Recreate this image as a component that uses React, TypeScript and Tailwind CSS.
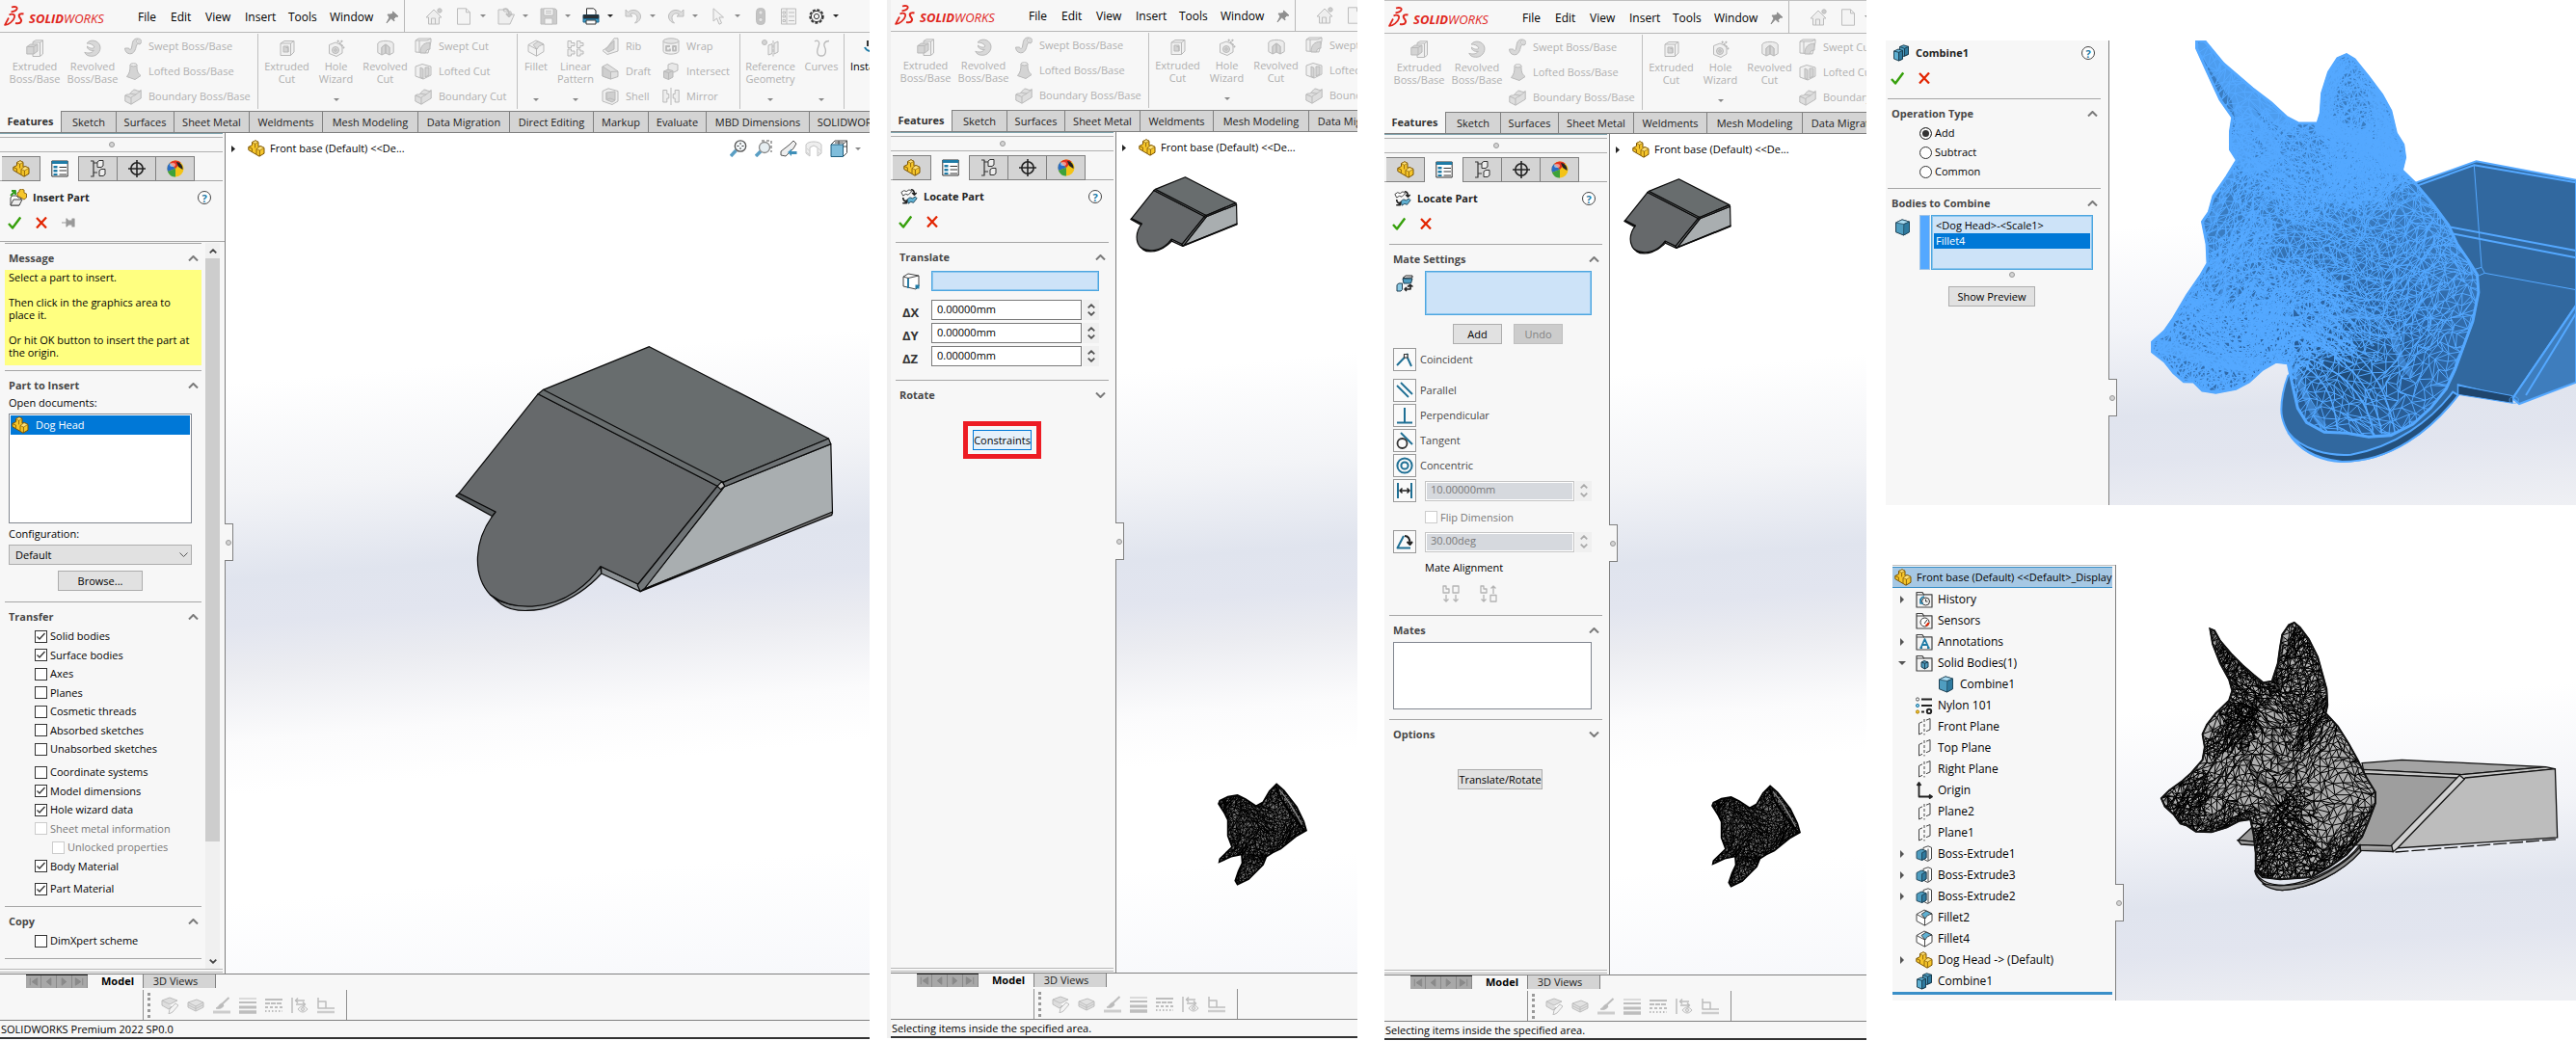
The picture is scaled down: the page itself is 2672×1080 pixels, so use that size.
import type { ReactNode } from "react";
import clsx from "clsx";

const FONT = "font-['Open_Sans','Noto_Sans',sans-serif]";

/* ---------- icons ---------- */

function Ico({ children, className = "size-[18px]", box = "0 0 18 18" }: { children: ReactNode; className?: string; box?: string }) {
  return (
    <svg viewBox={box} className={clsx("shrink-0", className)} fill="none" stroke="currentColor" strokeLinejoin="round" aria-hidden="true">
      {children}
    </svg>
  );
}

function PartIcon({ className }: { className?: string }) {
  return (
    <Ico className={className}>
      <g stroke="#7a5200">
        <path fill="#f6c62b" d="M.8 7.500 4.500 5.600V2.600L8 .8l3 1.600v5l2-1 4 2v5.800L12 17.200.8 10.600z" />
        <path fill="#ffe27a" strokeWidth=".6" d="M4.500 2.600 8 .8l3 1.600-3.400 1.800zM9 9.500l4-2.900 4 1.800-4.600 2.600z" />
        <path strokeWidth=".8" d="M.8 7.500 4.400 9v3.600M7.600 4.200v4.200M12.400 11v6M9 9.500v5.400" />
      </g>
    </Ico>
  );
}

function CubeIcon({ className }: { className?: string }) {
  return (
    <Ico className={className}>
      <g stroke="#1d3f52">
        <path fill="#4f9dc0" d="M1.500 4 8 .9l7.500 2.200v10.600L9.500 17l-8-3.200z" />
        <path fill="#a9dcf2" strokeWidth=".7" d="M1.500 4 8 .9l7.500 2.200-5.700 2.500z" />
        <path fill="#2f7a9f" strokeWidth=".7" d="m9.800 5.600 5.700-2.500v10.600L9.500 17z" />
      </g>
    </Ico>
  );
}

function CombineIcon() {
  return (
    <Ico>
      <g stroke="#16384a" strokeWidth=".9">
        <path fill="#4f9dc0" d="M7.500 2.500 11.500.8l5 1.500v8L12 12.500 7.500 11z" />
        <path fill="#2f7a9f" d="m12.500 4.300 4-2v8L12.500 12z" />
        <path fill="#5fb0d2" d="M1.500 7 6 5l4.500 1.400v8.800L6.500 17l-5-2z" />
        <path fill="#2f7a9f" d="m6.500 8.300 4-1.900v8.800L6.500 17z" />
        <path d="M1.500 7l5 1.300M7.500 2.500l5 1.800" />
      </g>
    </Ico>
  );
}

function ExtrudeIcon() {
  return (
    <Ico>
      <g stroke="#333" strokeWidth=".9">
        <path fill="#fff" d="M8 2.500 13 .8l3.500 1.500V14l-4 2.500L8 14z" />
        <path d="M13 3.500V16" />
        <path fill="#4f9dc0" stroke="#1d3f52" d="M1 6.500 6 4l5 1.600V13L6.500 15.500 1 13.500z" />
        <path fill="#2f7a9f" stroke="#1d3f52" d="m6.500 7.800 4.500-2.200V13l-4.500 2.500z" />
      </g>
    </Ico>
  );
}

function FilletIcon({ tone = "color" }: { tone?: "color" | "gray" }) {
  const edge = tone === "color" ? "#333" : "#b3b3b3";
  return (
    <Ico>
      <g stroke={edge} strokeWidth=".9">
        <path fill={tone === "color" ? "#fff" : "#f2f2f2"} d="M1 5.500 9 1l8 4v7.500L9.500 17.200 1 12.500z" />
        <path fill={tone === "color" ? "#5fb0d2" : "#dcdcdc"} d="M6 5.500 11 2l6 3c-4 1-6 2.500-7 5z" />
        <path d="M1 5.500 9.500 10v7" />
      </g>
    </Ico>
  );
}

function PlaneIcon() {
  return (
    <Ico>
      <path stroke="#444" d="M3.500 5.500 7 3.800M11 2.200l4-1.700V12M3.500 5.500V17L7 15.300M11 13.700l4-1.700" />
      <path stroke="#444" strokeDasharray="3 2" d="M9 1v16.500" />
    </Ico>
  );
}

function FolderIcon({ children }: { children: ReactNode }) {
  return (
    <Ico>
      <path stroke="#444" fill="#f4f4f4" strokeWidth="1.200" d="M1 17V1.500h6l1.500 2.300H17V17z" />
      <path stroke="#444" d="M1 4h8" />
      {children}
    </Ico>
  );
}

function OkCancel({ pin = false }: { pin?: boolean }) {
  return (
    <div className="flex h-[18px] items-center gap-[15px] pl-2">
      <button type="button" aria-label="OK">
        <Ico className="size-[14px]" box="0 0 14 14">
          <path stroke="#37a00c" strokeWidth="2.400" d="M1 8l4 4.500L13.200 1.500" />
        </Ico>
      </button>
      <button type="button" aria-label="Cancel">
        <Ico className="size-[12px]" box="0 0 12 12">
          <path stroke="#e22400" strokeWidth="2.200" d="M1 1l10 10.500M11 .5 1 11.500" />
        </Ico>
      </button>
      {pin && (
        <button type="button" aria-label="Keep visible">
          <Ico className="h-3 w-[14px]" box="0 0 14 12">
            <path fill="#999" stroke="#999" strokeWidth="1.200" d="M0 6h5M5 2v8l2-2.200h4V10h2V2h-2v2.200H7z" />
          </Ico>
        </button>
      )}
    </div>
  );
}

function HelpButton() {
  return (
    <button type="button" className="grid size-[14px] place-items-center rounded-full border border-[#444] bg-white leading-none font-bold text-[#1f7ba6]" aria-label="Help">
      ?
    </button>
  );
}

function Down({ dark = false }: { dark?: boolean }) {
  return (
    <Ico className="h-[3px] w-[6px]" box="0 0 6 3">
      <path d="M0 0h6L3 3z" stroke="none" fill={dark ? "#222" : "#888"} />
    </Ico>
  );
}

function Chevron({ down = false, small = false }: { down?: boolean; small?: boolean }) {
  return (
    <Ico className={small ? "h-[5px] w-2" : "h-[6px] w-[11px]"} box="0 0 11 6">
      <path strokeWidth={small ? 2.400 : 2} d={down ? "M1 .5 5.500 5 10 .5" : "M1 5.500 5.500 1 10 5.500"} />
    </Ico>
  );
}

/* ribbon icons, all in the disabled tone */
const RIBBON: Record<string, ReactNode> = {
  extrude: <><path fill="#f0f0f0" d="M7 2.500 10 .8h7.500V15l-3 2.500H7z" /><path d="M14.500 3v14M7 3h7.500l3-2" /><path fill="#d4d4d4" d="M.8 7.500 4.500 5H12v7l-4 3H.8z" /><path d="M.8 7.500H8V15M8 7.500 12 5" /></>,
  revolve: <path fill="#d8d8d8" d="M3 4C6-.5 15 0 16.800 7c1 5-3 10.500-9 10.300-4 0-6.300-2-7-4 4 1.500 8 .5 9.500-2C7 12 3 10 3.500 7c2 2 6 3 7.500 1C10 5 6 4 3 4z" />,
  sweep: <path fill="#d8d8d8" d="M11 1.500c3-1.500 7 0 7 3l-2 2.500c-1.500-1-3-.5-3.500 1C11.500 13 10 17 5.500 16.800 2 16.500.5 13.500.6 11h4c.3 2 2.300 2 2.800 0C8.400 7 8 3 11 1.500zM14 1.500c-1.500 1-2 3-.5 4" />,
  loft: <><path fill="#d4d4d4" d="M6 2.500h7c0 6 .5 8 4 11l-6 4-8.500-3C5.500 11 6 8 6 2.500z" /><ellipse cx="9.500" cy="2.300" rx="3.500" ry="1.600" fill="#eee" /></>,
  boundary: <><path fill="#dedede" d="M.8 8C3 6 4 8 6 6s3-5 6-3.500 4 1 5.200 0V11L7 17.200.8 14z" /><path d="M.8 8l6 2.500C9 8 9.500 9 12 7s3-2 5.200-4M7 10.500v6.700M6 6l6 1.200" /></>,
  cut: <><path fill="#f0f0f0" d="M2 4 6 1.500h10V13l-3.500 3.500H2z" /><path d="M2 4h10.500v12.500M12.500 4 16 1.500" /><path fill="#d4d4d4" d="M5 7h5v6H5zM7.500 8.500h2.500V13" /></>,
  hole: <><path fill="#f0f0f0" d="M1.500 5.500 8 3l7 3v8l-6 3.500-7.500-3z" /><circle cx="8" cy="11" r="3.500" fill="#d8d8d8" /><circle cx="8" cy="11" r="1.300" /><path strokeWidth="2" strokeDasharray="2 1" d="M10 1l7 8M15 1l-3 4" /></>,
  revcut: <><path fill="#ececec" d="M.8 4C3 .5 15 .5 17.200 4v9.500L13 16V8l-4-3-4 3v8L.8 13.500z" /><path fill="#d4d4d4" d="M5 8l4-3v9l-4 2zM13 8 9 5v9l4 2z" /></>,
  sweptcut: <><path fill="#f0f0f0" d="M1 3 4 1h13v3l-3 12-13-1z" /><path fill="#d4d4d4" d="M6 16C6 9 9 5.500 16 5v7c-3 0-4 1-4.500 4z" /><path d="M1 3h12l4-2M5 3v12" /></>,
  loftcut: <><path fill="#f0f0f0" d="M1 4 8 1.500 17 4v9l-8 4-8-3z" /><path fill="#d4d4d4" d="M6 5l3 1.500v10L6 15zM11 5h4v8l-4 2z" /></>,
  linear: <path fill="#eee" d="M1 1.500h3.500v2H8v3H4.500v2H1zM10.500 1.500H14v2h3v3h-3v2h-3.500zM1 10h3.500v2H8v3H4.500v2H1zM10.500 10H14v2h3v3h-3v2h-3.500z" />,
  rib: <><path fill="#eee" d="M6 10 13 .8h4V14L6 17.500 1 13.500z" /><path fill="#cfcfcf" d="M4 12.500 13 3v9l-6 3z" /></>,
  draft: <><path fill="#e0e0e0" d="M1 4 6 1.500 17 9v5.500L9.500 17 1 14z" /><path fill="#cfcfcf" d="m1 4 8.500 5.500V17L1 14z" /><path d="M9.500 9.500 17 9" /></>,
  shell: <><path fill="#eee" d="M1 3.500 7 .8l10 2.700V14l-6 3.500L1 14z" /><path fill="#cfcfcf" d="M5 5l9-1v9l-3 2-6-2.500z" /><path d="M5 5v7.500l4-1.500 5 2" /></>,
  wrap: <><path fill="#f0f0f0" d="M1 3.500v11c2 3.500 14 3.500 16 0v-11" /><ellipse cx="9" cy="3.500" rx="8" ry="2.700" fill="#e4e4e4" /><path strokeWidth="1.800" d="M8 9H4v4.500h4v-2M11 9h3v4.500h-3z" /></>,
  intersect: <><path fill="#e8e8e8" d="M6 2l4-1.500 6 1.500v6l-4 2-6-2z" /><path fill="#cfcfcf" d="M1.500 9 6 7l5 1.500V15l-4.500 2.500-5-2z" /><path d="M1.500 9l5 1.500v7M11 8.500l-4.500 2" /></>,
  mirror: <path d="M9 0v18M.8 2.500h4v4h2v4.500h-2v4h-4zM17.200 2.500h-4v4h-2v4.500h2v4h4z" fill="#eee" />,
  refgeo: <><circle cx="3" cy="3" r="2.500" fill="#d4d4d4" /><path fill="#eee" d="M7 6l4-1.500v10L7 16zM13 4l4-2v11l-4 2z" /><path strokeDasharray="3 1.500" d="M12 1v16.500" /></>,
  curves: <path strokeWidth="1.300" d="M2 2c3-2 6 0 4 5s-2 10 3 10 5-6 3.500-9S12 1.500 17 1.500" />,
};

function RibbonIcon({ name }: { name: string }) {
  if (name === "fillet") return <FilletIcon tone="gray" />;
  return <Ico className="size-[18px] text-[#b9b9b9]">{RIBBON[name]}</Ico>;
}

/* ---------- menu bar and ribbon ---------- */

function Logo() {
  return (
    <div className="flex w-[114px] shrink-0 items-center gap-1 pl-1 text-[#e0261c]">
      <Ico className="h-[22px] w-[22px]" box="0 0 22 22">
        <path strokeWidth="1.800" d="M8 1.500c3-1 6.500-.5 5.500 1.800C12.800 5 9.500 6 7.500 6.300" />
        <path strokeWidth="1.700" d="M5.500 9.500C8 8 12 8.500 11 12c-1 4-6 7.500-10 8L5 12.500" />
        <path strokeWidth="2" d="M20.500 8.500c-3-.8-5.500.5-4.500 2.800s3 3 1.800 5.200c-.8 1.700-3.500 2-5.800 1.500" />
      </Ico>
      <span className="pt-1 text-[13px] leading-4 italic">
        <b>SOLID</b>WORKS
      </span>
    </div>
  );
}

const MENUS: [string, string][] = [
  ["File", "w-[34px]"],
  ["Edit", "w-[36px]"],
  ["View", "w-[41px]"],
  ["Insert", "w-[45px]"],
  ["Tools", "w-[43px]"],
  ["Window", "w-[58px]"],
];

const QUICK: { label: string; drop?: boolean; dark?: boolean; art: ReactNode }[] = [
  { label: "Home", art: <><path fill="#eee" d="M1 10 9 2l8 8h-2.500v7h-11v-7z" /><path d="M6.500 17v-6h4v6" /><circle cx="15" cy="3" r="2.200" fill="#ccc" /></> },
  { label: "New", drop: true, art: <path fill="#f4f4f4" d="M2.500.8h9l4 4v12.400h-13zM11.500.8v4h4" /> },
  { label: "Open", drop: true, art: <><path fill="#eee" d="M1 17V2h5l1 2h7v3h3.500L13 17z" /><path strokeWidth="2" d="M6 2c4-2 6 1 6 5M9 6l3 3 3-3" /></> },
  { label: "Save", drop: true, art: <><path fill="#ccc" d="M1 1h15l1.500 1.500V17H1z" /><path fill="#f4f4f4" d="M4 1h10v7H4zM5 11h8v6H5zM6 3.500h6M6 5.500h6" /></> },
  { label: "Print", drop: true, dark: true, art: <><path stroke="#333" fill="#fff" d="M4.500 7V.8h7l2.500 2V7" /><path stroke="#17394c" fill="#2a2f33" d="M1 7.500h16v4H1z" /><path stroke="#17618a" fill="#3fa0cb" d="M1 11.500h16V15H1z" /><path stroke="#333" fill="#fff" d="M4 13h10v4H4z" /></> },
  { label: "Undo", drop: true, art: <path fill="#ddd" d="M1 2v7h7L5.500 6.800C9 4.500 13 7 13 10.500c0 2.500-1 4-2.500 5.500 4-1 6-4 6-7C16.500 3.500 9 0 3.500 4.500z" /> },
  { label: "Redo", drop: true, art: <path fill="#ddd" d="M17 2v7h-7l2.500-2.200C9 4.500 5 7 5 10.500c0 2.500 1 4 2.500 5.500-4-1-6-4-6-7C1.500 3.500 9 0 14.500 4.500z" /> },
  { label: "Select", drop: true, art: <path fill="#f2f2f2" d="M4 .8 14.500 10H10l2.500 6-2.500 1.200L7.500 11 4 14z" /> },
  { label: "Rebuild", art: <><rect x="4.500" y=".5" width="9" height="17" rx="4" fill="#c4c4c4" /><circle cx="9" cy="5" r="2.200" fill="#e4e4e4" /><circle cx="9" cy="12.500" r="2.200" fill="#e4e4e4" /></> },
  { label: "File properties", art: <><path fill="#f2f2f2" d="M1.500 1h15v16h-15zM7 1v16" /><path d="M3 4h2.500v2H3zM3 8h2.500v2H3zM3 12.500h2.500v2H3zM9 5h6M9 9h6M9 13.500h6" /></> },
  { label: "Options", drop: true, dark: true, art: <><circle cx="9" cy="9" r="6.800" stroke="#333" strokeWidth="1.800" strokeDasharray="3 1.600" /><circle cx="9" cy="9" r="5.600" stroke="#333" /><circle cx="9" cy="9" r="2.600" stroke="#333" /></> },
];

function MenuBar({ className, wide }: { className: string; wide?: boolean }) {
  return (
    <div className={clsx("flex shrink-0 overflow-hidden border-b border-[#b8b8b8]", className)}>
      <Logo />
      <nav className="flex shrink-0 items-center pt-[2px] pl-[29px] text-[12px]">
        {MENUS.map(([label, width]) => (
          <button key={label} type="button" className={clsx("text-left", width)}>
            {label}
          </button>
        ))}
        <Ico className="size-[14px]" box="0 0 14 14">
          <path fill="#8f8f8f" stroke="#8f8f8f" d="M7.500 1l5.500 5-2.500.3-2 2.200L9 11 5.500 8 1 13l3-6L2 4h3l2.500-1z" />
        </Ico>
      </nav>
      <div className="ml-[5px] w-px shrink-0 bg-[#b8b8b8]" />
      <div className="flex shrink-0 items-center pl-[21px]">
        {QUICK.slice(0, wide ? QUICK.length : 2).map((q) => (
          <button key={q.label} type="button" aria-label={q.label} className={clsx("flex items-center", q.drop ? "w-11 gap-2" : q.label === "Home" ? "w-[31px]" : "w-[29px]")}>
            <Ico className="size-[18px] text-[#bdbdbd]">{q.art}</Ico>
            {q.drop && <Down dark={q.dark} />}
          </button>
        ))}
      </div>
    </div>
  );
}

function BigTool({ icon, lines, width, drop }: { icon: string; lines: string[]; width: string; drop?: boolean }) {
  return (
    <button type="button" className={clsx("flex shrink-0 flex-col items-center pt-[6px] leading-[13px] text-[#b0b0b0]", width)}>
      <RibbonIcon name={icon} />
      <span className="mt-[3px] h-[26px] whitespace-nowrap">
        {lines[0]}
        <br />
        {lines[1]}
      </span>
      {drop && (
        <span className="mt-[14px]">
          <Down />
        </span>
      )}
    </button>
  );
}

function SmallTools({ items, className }: { items: [string, string][]; className: string }) {
  return (
    <div className={clsx("flex shrink-0 flex-col text-[#b0b0b0]", className)}>
      {items.map(([icon, label]) => (
        <button key={label} type="button" className="flex h-[26px] items-center gap-[7px] whitespace-nowrap">
          <RibbonIcon name={icon} />
          {label}
        </button>
      ))}
    </div>
  );
}

function Ribbon({ wide }: { wide?: boolean }) {
  return (
    <div className="flex h-[81px] shrink-0 overflow-hidden pt-px pb-[2px]">
      <div className="flex w-[268px] shrink-0 border-r border-[#c0c0c0] pl-[6px]">
        <BigTool icon="extrude" lines={["Extruded", "Boss/Base"]} width="w-[60px]" />
        <BigTool icon="revolve" lines={["Revolved", "Boss/Base"]} width="w-[60px]" />
        <SmallTools className="pl-[3px]" items={[["sweep", "Swept Boss/Base"], ["loft", "Lofted Boss/Base"], ["boundary", "Boundary Boss/Base"]]} />
      </div>
      <div className="flex w-[269px] shrink-0 border-r border-[#c0c0c0] pl-1">
        <BigTool icon="cut" lines={["Extruded", "Cut"]} width="w-[51px]" />
        <BigTool icon="hole" lines={["Hole", "Wizard"]} width="w-[51px]" drop />
        <BigTool icon="revcut" lines={["Revolved", "Cut"]} width="w-[51px]" />
        <SmallTools className="pl-[5px]" items={[["sweptcut", "Swept Cut"], ["loftcut", "Lofted Cut"], ["boundary", "Boundary Cut"]]} />
      </div>
      {wide && (
        <>
          <div className="flex w-[231px] shrink-0 border-r border-[#c0c0c0]">
            <BigTool icon="fillet" lines={["Fillet", ""]} width="w-[38px]" drop />
            <BigTool icon="linear" lines={["Linear", "Pattern"]} width="w-11" drop />
            <SmallTools className="w-[63px] pl-[5px]" items={[["rib", "Rib"], ["draft", "Draft"], ["shell", "Shell"]]} />
            <SmallTools className="pl-[5px]" items={[["wrap", "Wrap"], ["intersect", "Intersect"], ["mirror", "Mirror"]]} />
          </div>
          <div className="flex w-[108px] shrink-0 border-r border-[#c0c0c0]">
            <BigTool icon="refgeo" lines={["Reference", "Geometry"]} width="w-[62px]" drop />
            <BigTool icon="curves" lines={["Curves", ""]} width="w-11" drop />
          </div>
          <button type="button" className="flex shrink-0 flex-col items-start pt-[6px] pl-[6px] leading-[13px]">
            <Ico className="ml-[14px] size-[18px]">
              <path stroke="#1f7ba6" strokeWidth="2" d="M1 8c2 5 12 6 16 2" />
              <path stroke="#333" strokeWidth="2" d="M4 1v6" />
            </Ico>
            <span className="mt-[3px]">Instant3D</span>
          </button>
        </>
      )}
    </div>
  );
}

const TABS: [string, string][] = [
  ["Features", "w-[63px]"],
  ["Sketch", "w-[57px]"],
  ["Surfaces", "w-[60px]"],
  ["Sheet Metal", "w-[78px]"],
  ["Weldments", "w-[76px]"],
  ["Mesh Modeling", "w-[99px]"],
  ["Data Migration", "w-[95px]"],
  ["Direct Editing", "w-[87px]"],
  ["Markup", "w-[57px]"],
  ["Evaluate", "w-[60px]"],
  ["MBD Dimensions", "w-[107px]"],
  ["SOLIDWORKS Add-Ins", "w-[128px]"],
];

function CommandTabs({ wide }: { wide?: boolean }) {
  return (
    <div className="flex h-[23px] shrink-0 overflow-hidden border-b border-[#808080] text-[#222]">
      {TABS.slice(0, wide ? TABS.length : 7).map(([label, width], i) => (
        <button
          key={label}
          type="button"
          className={clsx("shrink-0 whitespace-nowrap", width, i === 0 ? "font-bold text-[#333]" : "border-t border-l border-[#808080] bg-[#d4d4d4]")}
        >
          {label}
        </button>
      ))}
    </div>
  );
}

/* ---------- property manager pieces ---------- */

const PM_TABS: { label: string; art: ReactNode }[] = [
  { label: "FeatureManager", art: <PartIcon /> },
  { label: "PropertyManager", art: <Ico><path stroke="#333" fill="#fff" d="M.8 1h16.400v16H.8z" /><path stroke="none" fill="#1f7ba6" d="M.8 1h16.400v3H.8zM2.500 6h4v2.500h-4zM2.500 10h4v2.500h-4zM2.500 14h4v2h-4z" /><path stroke="#333" d="M8.500 7.500H16M8.500 11H16M8.500 15H16" /></Ico> },
  { label: "ConfigurationManager", art: <Ico><path stroke="#333" strokeWidth="1.200" d="M4 1v15M4 3h4M4 13h4M1 1h3v16H1" /><path stroke="#333" fill="#eee" d="M8 2l2-1.500h4V6l-2 1.500H8zM10 11l2-1.500h4V15l-2 1.500h-4z" /></Ico> },
  { label: "DimXpertManager", art: <Ico><circle cx="9" cy="9" r="6.200" stroke="#222" strokeWidth="1.600" /><path stroke="#222" strokeWidth="1.600" d="M9 0v18M0 9h18" /></Ico> },
  { label: "DisplayManager", art: <Ico><g stroke="none"><circle cx="9" cy="9" r="8.500" fill="#f3c316" /><path fill="#e23222" d="M9 9 3 3a8.500 8.500 0 0 1 11.500-.5z" /><path fill="#2a6cc4" d="M9 9 1 12A8.500 8.500 0 0 1 3 3z" /><path fill="#3da23a" d="M9 9v8.500A8.500 8.500 0 0 1 1 12z" /><path fill="#222" d="M10 2c4 0 7 4 6.500 8L12 7z" /><ellipse cx="6" cy="5" rx="3" ry="2" fill="#fff" opacity=".5" /></g></Ico> },
];

function Section({ title, closed, children, className }: { title: string; closed?: boolean; children?: ReactNode; className?: string }) {
  return (
    <section className={clsx("border-t border-[#a6a6a6]", className)}>
      <h3 className="flex h-[25px] items-center justify-between pt-1 pr-[3px] pl-1 font-bold text-[#484848]">
        {title}
        <button type="button" className="text-[#7a7a7a]" aria-label={closed ? `Expand ${title}` : `Collapse ${title}`}>
          <Chevron down={closed} />
        </button>
      </h3>
      {children}
    </section>
  );
}

function PushButton({ children, className, disabled }: { children: ReactNode; className: string; disabled?: boolean }) {
  return (
    <button
      type="button"
      disabled={disabled}
      className={clsx("h-[21px] border whitespace-nowrap", disabled ? "border-[#bfbfbf] bg-[#cccccc] text-[#838383]" : "border-[#adadad] bg-[#e1e1e1]", className)}
    >
      {children}
    </button>
  );
}

function Check({ label, checked, disabled, className }: { label: string; checked?: boolean; disabled?: boolean; className?: string }) {
  return (
    <label className={clsx("flex items-center gap-[3px] whitespace-nowrap", disabled && "text-[#787878]", className)}>
      <span className="grid">
        <input
          type="checkbox"
          defaultChecked={checked}
          disabled={disabled}
          className="peer size-[13px] appearance-none border border-[#333] bg-white [grid-area:1/1] disabled:border-[#cccccc]"
        />
        <span className="pointer-events-none hidden [grid-area:1/1] peer-checked:block">
          <Ico className="size-[13px]" box="0 0 13 13">
            <path stroke="#333" strokeWidth="1.300" d="M2.500 6.500 5 9l5.500-6" />
          </Ico>
        </span>
      </span>
      {label}
    </label>
  );
}

function Spin({ label, value, disabled }: { label: string; value: string; disabled?: boolean }) {
  return (
    <span className="flex h-[21px] min-w-0 flex-1">
      <input
        aria-label={label}
        defaultValue={value}
        disabled={disabled}
        className={clsx(
          "w-0 min-w-0 flex-1 border px-[5px] pb-[2px]",
          disabled ? "border-[#c4c4c4] bg-[#d6d9de] text-[#787878] inset-ring inset-ring-white" : "border-[#7a7a7a] bg-white",
        )}
      />
      <span className={clsx("ml-px flex w-[17px] shrink-0 flex-col items-center justify-around bg-[#f0f0f0] py-[2px]", disabled ? "text-[#aaa]" : "text-[#555]")}>
        <button type="button" disabled={disabled} aria-label={`Increase ${label}`}>
          <Chevron small />
        </button>
        <button type="button" disabled={disabled} aria-label={`Decrease ${label}`}>
          <Chevron small down />
        </button>
      </span>
    </span>
  );
}

const HIGHLIGHT = "border border-[#4da6e0] bg-[#cde3f8] inset-ring inset-ring-[#8cc6ee]";

type Option = { label: string; on?: boolean; off?: boolean };

const TRANSFER: Option[][] = [
  [{ label: "Solid bodies", on: true }, { label: "Surface bodies", on: true }, { label: "Axes" }, { label: "Planes" }, { label: "Cosmetic threads" }, { label: "Absorbed sketches" }, { label: "Unabsorbed sketches" }],
  [{ label: "Coordinate systems" }, { label: "Model dimensions", on: true }, { label: "Hole wizard data", on: true }, { label: "Sheet metal information", off: true }, { label: "Unlocked properties", off: true }, { label: "Body Material", on: true }],
  [{ label: "Part Material", on: true }],
];

function InsertPartPanel() {
  return (
    <div className="-mt-0.5 flex min-h-0 min-w-0 flex-1 border-t border-[#a6a6a6] pt-px">
      <div className="ml-[5px] min-w-0 flex-1 overflow-hidden">
        <Section title="Message" className="pb-[5px]">
          <div className="mt-[2px] h-[99px] bg-[#ffff80] pt-px pr-2 pl-1 leading-[13px] whitespace-pre-line">
            {"Select a part to insert.\n\nThen click in the graphics area to place it.\n\nOr hit OK button to insert the part at the origin."}
          </div>
        </Section>
        <Section title="Part to Insert" className="pb-[11px]">
          <div className="mr-[10px] ml-1">
            <p className="h-[19px]">Open documents:</p>
            <ul className="h-[114px] border border-[#828790] bg-white p-px">
              <li className="flex h-5 items-center gap-[7px] bg-[#0078d7] pl-px text-white">
                <PartIcon />
                Dog Head
              </li>
            </ul>
            <label htmlFor="config" className="flex h-[22px] items-center">
              Configuration:
            </label>
            <div className="grid">
              <select id="config" className="h-[21px] appearance-none border border-[#adadad] bg-[#e1e1e1] px-[6px] [grid-area:1/1]">
                <option>Default</option>
              </select>
              <span className="pointer-events-none mr-1 self-center justify-self-end text-[#555] [grid-area:1/1]">
                <Ico className="h-[5px] w-[9px]" box="0 0 9 5">
                  <path d="M.5.5l4 4 4-4" />
                </Ico>
              </span>
            </div>
            <PushButton className="mx-auto mt-[6px] block w-[88px]">Browse...</PushButton>
          </div>
        </Section>
        <Section title="Transfer" className="pb-2">
          <div className="flex flex-col gap-1">
            {TRANSFER.map((group, i) => (
              <div key={i}>
                {group.map((o) => (
                  <Check
                    key={o.label}
                    label={o.label}
                    checked={o.on}
                    disabled={o.off}
                    className={clsx("odd:h-5 even:h-[19px]", o.label === "Unlocked properties" ? "ml-[49px]" : "ml-[31px]")}
                  />
                ))}
              </div>
            ))}
          </div>
        </Section>
        <Section title="Copy" className="border-b pb-2">
          <Check label="DimXpert scheme" className="ml-[31px] h-5" />
        </Section>
      </div>
      <div className="mr-[5px] ml-1 flex w-[15px] flex-col bg-[#f0f0f0] text-[#444]">
        <span className="grid h-4 place-items-center">
          <Chevron small />
        </span>
        <span className="flex-[604] bg-[#cdcdcd]" />
        <span className="flex-[116]" />
        <span className="grid h-4 place-items-center">
          <Chevron small down />
        </span>
      </div>
    </div>
  );
}

function TranslatePanel() {
  return (
    <div className="mr-[7px] ml-[5px] min-w-0 flex-1">
      <Section title="Translate" className="pb-[11px]">
        <div className="mr-[10px] ml-[7px]">
          <div className="mt-1 mb-[9px] flex items-center">
            <span className="w-[30px] shrink-0">
              <Ico>
                <path stroke="#444" fill="#fff" d="M1 4 6 1l11 2v11l-3 3-13-3z" />
                <path stroke="#444" d="M1 4l5 1.500L17 3M6 5.500V16" />
                <path stroke="#1f7ba6" strokeWidth="1.800" d="M6 6v10" />
                <path stroke="none" fill="#1f7ba6" d="M13.500 12.500h4v4h-4z" />
              </Ico>
            </span>
            <input aria-label="Translate reference" readOnly className={clsx("h-[21px] w-0 min-w-0 flex-1", HIGHLIGHT)} />
          </div>
          {["X", "Y", "Z"].map((axis) => (
            <div key={axis} className="mb-[3px] flex h-[21px] items-center">
              <b className="w-[30px] shrink-0 pt-1 text-[13px] leading-4 text-[#333]">Δ{axis}</b>
              <Spin label={`Delta ${axis}`} value="0.00000mm" />
            </div>
          ))}
        </div>
      </Section>
      <Section title="Rotate" closed />
      <div className="mt-[17px] ml-[70px] w-[81px] border-[5px] border-[#ed1c24] px-[5px] py-1">
        <button type="button" className="h-[21px] w-full border border-[#0078d7] bg-[#e5f1fb] whitespace-nowrap">
          Constraints
        </button>
      </div>
    </div>
  );
}

const MATES: { label: string; gap?: boolean; art: ReactNode }[] = [
  { label: "Coincident", gap: true, art: <><path strokeWidth="2" d="M1 15 12.500 3M10.500 4 16 16" /><path stroke="#333" fill="#fff" strokeWidth="1.200" d="M8.500 3.500h3.500V7H8.500z" /></> },
  { label: "Parallel", art: <path strokeWidth="1.800" d="M1 4l12 12M5 1l12 12" /> },
  { label: "Perpendicular", art: <path strokeWidth="2" d="M9 1v15M1 16.500h16" /> },
  { label: "Tangent", art: <><path strokeWidth="2" d="M5 1l12 12" /><circle cx="6.500" cy="12" r="5" stroke="#333" strokeWidth="1.800" /></> },
  { label: "Concentric", art: <><circle cx="9" cy="9" r="7.600" strokeWidth="2" /><circle cx="9" cy="9" r="3.600" strokeWidth="2" /></> },
];

function MateButton({ label, children }: { label: string; children: ReactNode }) {
  return (
    <button type="button" aria-label={label} className="grid size-6 shrink-0 place-items-center border border-[#999] bg-[#fafafa] text-[#1f6f94]">
      <Ico>{children}</Ico>
    </button>
  );
}

function MatePanel() {
  return (
    <div className="mr-[7px] ml-[5px] min-w-0 flex-1">
      <Section title="Mate Settings" className="pb-[13px]">
        <div className="mr-[11px] ml-1">
          <div className="mt-[2px] flex pl-[3px]">
            <span className="w-[30px] shrink-0 pt-1">
              <Ico>
                <path stroke="#222" fill="#fff" d="M7 3.500 10 1h7v2z" />
                <path stroke="#1d3f52" fill="#4f9dc0" d="M7 4h10l-1.500 5H8z" />
                <path stroke="#1d3f52" fill="#8ccbe6" d="M1 10.500 3 9h3.500v6.500L5 17H1z" />
                <path stroke="#222" strokeWidth="1.600" d="M9 15h6v-4M12 12.500l3-2 2.500 2M11 13l-2 2 2 2" />
              </Ico>
            </span>
            <div className={clsx("h-[46px] flex-1", HIGHLIGHT)} />
          </div>
          <div className="mt-[9px] mb-1 flex gap-3 pl-[62px]">
            <PushButton className="w-[51px]">Add</PushButton>
            <PushButton className="w-[51px]" disabled>
              Undo
            </PushButton>
          </div>
          {MATES.map((m) => (
            <div key={m.label} className={clsx("flex items-center gap-1 text-[#484848]", m.gap ? "mb-2" : "mb-[2px]")}>
              <MateButton label={m.label}>{m.art}</MateButton>
              {m.label}
            </div>
          ))}
          <div className="flex items-center gap-[9px]">
            <MateButton label="Distance">
              <path strokeWidth="2" d="M2 1v16M16 1v16" />
              <path stroke="#222" strokeWidth="1.500" d="M4 9h10M6.500 6.500 4 9l2.500 2.500M11.500 6.500 14 9l-2.500 2.500" />
            </MateButton>
            <Spin label="Distance" value="10.00000mm" disabled />
          </div>
          <Check label="Flip Dimension" disabled className="ml-[33px] h-[29px] pt-[2px]" />
          <div className="flex items-center gap-[9px]">
            <MateButton label="Angle">
              <path strokeWidth="2" d="M8 3 1.500 15.500H15" />
              <path stroke="#222" strokeWidth="2" d="M9 3c4 0 5.500 3 5.500 8M11.500 9l3 3 2.500-3" />
            </MateButton>
            <Spin label="Angle" value="30.00deg" disabled />
          </div>
          <p className="mb-1 flex h-[29px] items-center pl-[33px]">Mate Alignment</p>
          <div className="flex gap-[21px] pl-[51px] text-[#b4b4b4]">
            <button type="button" aria-label="Aligned">
              <Ico>
                <path strokeWidth="1.300" d="M1 1h3v3h3v4H1zM11 1h6v7h-6zM4 10v7M1.500 14.500 4 17l2.500-2.500M14 10v7M11.500 14.500 14 17l2.500-2.500" />
              </Ico>
            </button>
            <button type="button" aria-label="Anti-aligned">
              <Ico>
                <path strokeWidth="1.300" d="M1 1h3v3h3v4H1zM4 10v7M1.500 14.500 4 17l2.500-2.500M11 10.500h6V17h-6zM14 9V1M11.500 3.500 14 1l2.500 2.500" />
              </Ico>
            </button>
          </div>
        </div>
      </Section>
      <Section title="Mates" className="pb-[10px]">
        <div className="mt-[2px] mr-[11px] ml-1 h-[70px] border border-[#828790] bg-white" />
      </Section>
      <Section title="Options" closed />
      <PushButton className="mt-[26px] ml-[71px] w-[88px]">Translate/Rotate</PushButton>
    </div>
  );
}

/* ---------- drawn models ---------- */

function noise(n: number) {
  const v = Math.sin(n * 127.1) * 43758.5453;
  return v - Math.floor(v);
}

// triangulated, jittered grid; `round` keeps only a ragged ellipse of it
function mesh(x0: number, y0: number, x1: number, y1: number, sx: number, sy: number, seed: number, round = false) {
  const cols = Math.ceil((x1 - x0) / sx) + 1;
  const rows = Math.ceil((y1 - y0) / sy) + 1;
  const at = (c: number, r: number) => {
    const n = seed + c * 57 + r * 131;
    const x = x0 + (c + (noise(n) - 0.5) * 0.95) * sx + Math.sin(r * 0.31 + c * 0.12) * sx * 1.6;
    const y = y0 + (r + (noise(n + 0.5) - 0.5) * 0.95) * sy + Math.cos(c * 0.37 - r * 0.1) * sy * 1.6;
    return `${x.toFixed(0)} ${y.toFixed(0)}`;
  };
  let d = "";
  for (let r = 0; r < rows; r++) {
    for (let c = 0; c < cols; c++) {
      if (round) {
        const u = (2 * c) / cols - 1;
        const v = (2 * r) / rows - 1;
        if (u * u + v * v > 0.45 + noise(seed + c * 19 + r * 23) * 0.6) continue;
      }
      d += `M${at(c, r)}L${at(c + 1, r)}M${at(c, r)}L${at(c, r + 1)}`;
      d += noise(seed + c * 7 + r * 3) > 0.5 ? `M${at(c, r)}L${at(c + 1, r + 1)}` : `M${at(c + 1, r)}L${at(c, r + 1)}`;
    }
  }
  return d;
}

function BaseModel({ className }: { className: string }) {
  return (
    <svg viewBox="90 110 1190 840" className={clsx("absolute", className)} stroke="#0a0a0a" strokeLinejoin="round" strokeWidth="1.200" aria-label="Front base">
      <defs>
        <linearGradient id="edge" x1="0" y1="0" x2="1" y2="1">
          <stop offset="0" stopColor="#4c5052" />
          <stop offset="1" stopColor="#9da2a5" />
        </linearGradient>
      </defs>
      <g className="[&>path]:[vector-effect:non-scaling-stroke]">
        <path fill="url(#edge)" d="M98 583 108 574 222 632 212 646zM550 802 665 857 672 880 551 824zM205 890C250 930 330 935 400 905S500 850 548 805L551 824C500 880 440 910 400 925S280 950 240 920z" />
        <path fill="#66696b" d="M354 265 108 574 222 632C150 720 150 830 205 890 280 945 390 935 470 880 500 860 530 830 548 802L665 857 912 552z" />
        <path fill="#686d6e" d="M354 265 370 252 700 118 1258 404 930 540 912 552z" />
        <path d="M370 252 930 540" />
        <path fill="#a9aeb0" d="M933 554 1265 421 1270 636 684 872z" />
        <path fill="url(#edge)" d="M930 540 1258 404 1265 421 933 554zM912 552 930 558 684 872 672 880 663 860z" />
        <path fill="#777" d="M684 872 1270 632 1268 642 672 880z" />
        <path d="M912 552 926 537 935 552 922 562z" fill="#bbb" />
      </g>
    </svg>
  );
}

const SMALL_DOG = "M1227 98 1250 118 1290 170 1312 215 1320 243 1290 260 1240 300 1215 312 1195 325 1185 350 1140 395 1105 412 1098 400 1108 370 1120 345 1118 318 1085 325 1048 342 1050 332 1088 295 1075 260 1075 210 1065 190 1046 160 1050 150 1075 138 1105 133 1130 145 1163 167 1185 155 1205 120Z";

function SmallDog({ id }: { id: string }) {
  return (
    <svg viewBox="1040 92 286 326" className="absolute top-[674px] left-[104px] h-[109px] w-[95px]" fill="none" aria-label="Dog head">
      <clipPath id={id}>
        <path d={SMALL_DOG} />
      </clipPath>
      <path d={SMALL_DOG} fill="#6d6d6d" />
      <g clipPath={`url(#${id})`} stroke="#000">
        <path strokeWidth="3" d={mesh(1020, 80, 1330, 420, 9, 9, 4)} />
        <path strokeWidth="8" d="M1108 130C1140 200 1070 280 1130 320S1240 300 1300 260M1060 140 1100 300M1100 412 1130 320 1200 320" opacity=".6" />
        <path strokeWidth="6" d="M1225 104C1237 150 1285 210 1315 244" />
        <path strokeWidth="4" stroke="#8a8a8a" d="M1236 116C1258 140 1288 190 1306 224" />
      </g>
      <path d={SMALL_DOG} stroke="#000" strokeWidth="5" />
    </svg>
  );
}

const BLUE_DOG =
  "M712 36 730 38 772 108 838 186 880 230 915 275 940 293 985 294 992 262 995 200 1010 135 1030 92 1050 80 1068 95 1100 150 1130 205 1150 255 1162 325 1178 360 1182 400 1175 440 1205 480 1245 545 1280 610 1300 670 1325 720 1345 765 1348 820 1335 910 1315 985 1295 1060 1275 1120 1240 1180 1200 1230 1150 1265 1100 1270 1050 1258 1000 1255 960 1225 940 1180 930 1120 918 1040 890 1036 860 1060 830 1098 800 1120 755 1132 725 1125 705 1098 683 1097 660 1070 640 1035 612 1005 612 975 640 940 660 900 690 830 720 770 737 730 735 670 725 600 740 570 750 520 780 460 803 408 788 375 788 320 793 275 765 220 735 130 712 60Z";

function CombinePreview() {
  return (
    <svg viewBox="515 36 1053 1446" preserveAspectRatio="none" className="absolute inset-0 size-full" fill="none" aria-label="Combined bodies preview">
      <defs>
        <clipPath id="blueDog">
          <path d={BLUE_DOG} />
        </clipPath>
        <radialGradient id="blueShade" gradientUnits="userSpaceOnUse" cx="1060" cy="1080" r="520">
          <stop offset="0" stopColor="#1f4a75" />
          <stop offset=".4" stopColor="#2d64a0" />
          <stop offset="1" stopColor="#3b7cc0" />
        </radialGradient>
      </defs>
      <g stroke="#54a8ff" strokeWidth="2" className="[&_path]:[vector-effect:non-scaling-stroke]">
        <path fill="#31689f" d="M1200 482 1343 412 1568 470V860L1425 1150 1302 1108V1140C1240 1250 1150 1347 1040 1347 940 1340 903 1240 903 1185 903 1140 910 1110 918 1080L1100 900z" />
        <path fill="#3e7dbd" d="M1568 862 1425 1150 1440 1167 1568 1100z" />
        <path fill="#1f466e" strokeWidth="1" d="M1302 1110 1425 1142V1165L1302 1138z" />
        <path fill="#24507c" d="M918 1255C950 1310 1010 1330 1060 1325 1160 1300 1240 1220 1290 1130L1302 1140C1240 1250 1150 1347 1040 1347 970 1335 940 1300 918 1255z" />
        <path d="M1205 490 1338 424 1568 478M1275 614 1568 690M1285 636 1568 712M1455 1140 1568 885" />
        <path strokeWidth="1" d="M1338 424 1355 742 1362 760 1568 812M1362 760 1345 770M1355 742 1340 748" />
        <circle cx="1428" cy="1155" r="10" />
        <path d={BLUE_DOG} fill="url(#blueShade)" />
        <g clipPath="url(#blueDog)" strokeWidth="1">
          <path d={mesh(590, 20, 1370, 1300, 20, 25, 11)} />
          <path d={mesh(700, 260, 1370, 1000, 19, 24, 31, true)} />
          <path strokeWidth="1.300" d={mesh(680, 220, 1240, 560, 12, 16, 3, true)} />
          <path strokeWidth="1.400" d={mesh(960, 20, 1220, 520, 10, 14, 8, true)} />
          <path strokeWidth="1.600" d={mesh(580, 780, 960, 1180, 11, 15, 9, true)} />
          <path strokeWidth="1.200" d={mesh(800, 740, 1080, 1060, 14, 18, 13, true)} />
          <path strokeWidth="1.300" d={mesh(700, 560, 900, 960, 14, 18, 14, true)} />
          <path
            strokeWidth="14"
            opacity=".75"
            d="M722 40C760 140 810 220 850 300S900 380 860 420 790 380 800 330M770 110C820 200 880 270 930 310M1000 300C1010 240 1000 180 1040 100M1110 190C1130 300 1150 380 1172 440M980 310C1060 320 1120 360 1150 420M625 985C700 1000 740 1060 860 1040M720 40 800 180 830 400"
          />
          <path strokeWidth="7" opacity=".5" d="M960 960C980 900 1060 880 1120 900 1180 960 1150 1020 1200 1080M930 1050C960 1130 960 1180 1000 1240M740 600C770 560 760 520 800 440M745 720C800 760 780 800 760 860" />
          <path strokeWidth="1.500" d="M930 1000C1010 1060 1080 1080 1110 1250M960 960C1040 1020 1110 1100 1130 1260M980 940C1080 980 1140 1100 1160 1260M940 1030C990 1080 1020 1120 1030 1250" />
        </g>
        <path d={BLUE_DOG} strokeWidth="3" />
      </g>
    </svg>
  );
}

const GRAY_DOG =
  "M742 232 752 238 765 270 790 310 815 345 840 375 862 400 882 395 895 340 900 290 905 250 920 220 932 213 945 228 965 265 985 320 995 370 1005 420 1007 470 1003 495 1030 535 1055 590 1075 640 1095 695 1115 740 1115 775 1100 830 1085 880 1050 935 1010 975 970 1005 900 1012 860 1005 845 985 845 930 840 870 833 825 808 830 780 850 745 865 710 863 690 845 675 838 660 810 640 785 632 760 650 735 680 705 700 680 725 640 730 600 725 560 735 530 755 495 785 455 792 425 785 390 765 340 748 280Z";

function CombineResult() {
  return (
    <svg viewBox="530 33 1038 1356" preserveAspectRatio="none" className="absolute inset-0 size-full" fill="none" aria-label="Combined body">
      <defs>
        <clipPath id="grayDog">
          <path d={GRAY_DOG} />
        </clipPath>
        <linearGradient id="lip" x1="0" y1="0" x2="0" y2="1">
          <stop offset="0" stopColor="#c4c4c4" />
          <stop offset="1" stopColor="#777" />
        </linearGradient>
      </defs>
      <g stroke="#111" strokeWidth="1.300" className="[&_path]:[vector-effect:non-scaling-stroke]">
        <path fill="#989898" d="M840 845 805 890 845 895z" />
        <path fill="url(#lip)" d="M805 890 845 895V906L812 903z" />
        <path fill="#a4a4a4" d="M1085 650 1175 640 1500 662 1310 686 1088 670z" />
        <path fill="#c8c8c8" d="M1088 670 1310 686 1500 662 1520 668 1315 698 1090 683z" />
        <path fill="#9e9e9e" d="M1090 683 1303 696 1152 908 1060 905 1110 760z" />
        <path fill="#bdbdbd" d="M1318 696 1521 668 1526 882 1160 915z" />
        <path fill="#cfcfcf" d="M1305 688 1316 700 1165 915 1155 926 1150 908z" />
        <path fill="url(#lip)" d="M1080 905 1152 908 1155 926 1082 922z" />
        <path strokeDasharray="14 3" d="M1160 927 1526 887" />
        <path fill="#bcbcbc" d="M845 985C848 1010 870 1030 910 1030 980 1020 1050 960 1080 905L1082 925C1040 990 970 1040 905 1046 870 1040 845 1010 843 985z" />
        <path fill="#8e8e8e" d="M860 1025C890 1036 920 1032 950 1025 1010 1000 1060 945 1080 912L1082 925C1040 990 970 1040 905 1046 885 1045 870 1036 860 1025z" />
        <path d={GRAY_DOG} fill="#b0b0b0" />
        <g clipPath="url(#grayDog)" stroke="#000" strokeWidth="1">
          <path d={mesh(610, 200, 1130, 1030, 14, 19, 21)} />
          <path d={mesh(870, 170, 1030, 580, 10, 14, 5, true)} />
          <path d={mesh(720, 190, 880, 520, 10, 14, 6, true)} />
          <path d={mesh(610, 680, 740, 900, 11, 14, 7, true)} />
          <path d={mesh(660, 780, 860, 890, 13, 15, 17, true)} />
          <path d={mesh(820, 720, 980, 1060, 11, 15, 2, true)} />
          <path d={mesh(710, 470, 850, 620, 11, 14, 12, true)} />
          <path strokeWidth=".8" d={mesh(960, 800, 1110, 1020, 13, 17, 16, true)} />
          <path
            strokeWidth="5"
            opacity=".35"
            d="M750 250C770 310 800 360 800 420M790 320 860 410M905 260C900 350 890 420 870 470M990 380C980 450 1000 480 950 500M850 440C830 540 800 560 830 650S900 700 920 780M640 760C680 800 700 850 760 850L840 800C880 770 900 760 880 720M850 850C870 920 850 960 880 1005M740 540C770 560 790 580 820 560M900 520C870 560 880 620 930 700M1020 880C1000 920 1020 940 980 990"
          />
        </g>
        <path d={GRAY_DOG} strokeWidth="2" />
      </g>
    </svg>
  );
}

/* ---------- application window ---------- */

function Dot() {
  return <span className="block size-[6px] rounded-full border border-[#999] bg-[#d4d4d4]" />;
}

function Handle({ className }: { className: string }) {
  return (
    <span className={clsx("absolute -left-px grid h-[39px] w-[9px] place-items-center border border-l-0 border-[#808080] bg-[#f7f7f7]", className)}>
      <Dot />
    </span>
  );
}

const HEADS_UP: { label: string; art: ReactNode }[] = [
  { label: "Zoom to fit", art: <><path stroke="#5a9fc4" strokeWidth="3.500" d="M1 17l5.500-6" /><circle cx="11" cy="6.500" r="5.700" stroke="#555" fill="#f4f8fa" strokeWidth="1.300" /><path stroke="#333" strokeDasharray="2 3" d="M11 3v7M7.500 6.500h7" /></> },
  { label: "Zoom to area", art: <><path stroke="#555" strokeDasharray="3 2" d="M7 1h10v12" /><path stroke="#5a9fc4" strokeWidth="3.500" d="M1 17l5-5" /><circle cx="10" cy="8" r="5.500" stroke="#888" fill="#e6eef2" strokeWidth="1.300" /></> },
  { label: "Previous view", art: <><path stroke="#555" fill="#eee" d="M1 12l9-7 4-4 3 3-3 5-8 8-5-1z" /><path stroke="none" fill="#3f8fb8" d="M8 13l4-3.500V12h5.500v3H12v2z" /></> },
  { label: "Section view", art: <><path stroke="#c4c4c4" fill="#eee" d="M1 5c2-4 14-4 16 0v9l-4 3V8L9 6 5 8v9l-4-3z" /><path stroke="#d0d0d0" d="M2 9l3 3M2 13l3 3M14 9l3 3M14 13l2 2" /></> },
  { label: "View orientation", art: <><path stroke="#444" d="M5 1h12.500v12.500L14 17M5 1 1 5M17.500 1 13 5M9 1v4M17.500 7H14M5 3h9" /><path stroke="#1f5f80" fill="#7fbddb" d="M1 5h12.500v12.500H1z" /></> },
];

function BottomBar({ status }: { status: string }) {
  return (
    <footer className="flex shrink-0 flex-col">
      <div className="flex h-[15px] border-t border-[#808080] pl-[27px]">
        <div className="flex border-t border-[#222] bg-[#a8a8a8] text-[#888]">
          {["M12 3v8L6 7zM4 3v8", "M10 3v8L5 7z", "M5 3v8l5-4z", "M3 3v8l6-4zM11 3v8"].map((d) => (
            <button key={d} type="button" aria-label="Scroll tabs" className="w-4 border-r border-[#8a8a8a]">
              <Ico className="h-[13px] w-[15px]" box="0 0 15 14">
                <path d={d} fill="#8a8a8a" />
              </Ico>
            </button>
          ))}
        </div>
        <button type="button" className="w-[57px] pl-[5px] leading-[14px] font-bold">
          Model
        </button>
        <button type="button" className="w-[76px] border-x border-[#808080] bg-[#d4d4d4] pr-2 leading-[14px] text-[#222]">
          3D Views
        </button>
      </div>
      <div className="flex h-[33px] pt-[2px]">
        <div className="ml-[148px] flex w-[212px] shrink-0 items-center gap-[9px] border-x border-[#909090] text-[#bdbdbd]">
          <span className="mr-[2px] ml-1 h-[26px] border-l-[3px] border-dotted border-[#999]" />
          <Ico><path fill="#ddd" d="M1 4l8-3 8 3-8 4zM1 4v5l7 4 3-3" /><path fill="#f4f4f4" d="m9 13 6-6 3 2-6 7-4 2z" /></Ico>
          <Ico><path fill="#e2e2e2" d="M1 6l9-3 7 3v5l-8 4-8-4z" /><path d="M1 6l8 4 8-4M1 8.500l8 4 8-4M9 10v5" /></Ico>
          <Ico><path strokeWidth="2" d="M16.500 1 9 8" /><path fill="#bbb" d="M9 7l2 2c-1 3-5 4-8 3 3-1 3-4 6-5z" /><path strokeWidth="3" stroke="#ccc" d="M0 16h18" /></Ico>
          <Ico><path d="M0 2h18" /><path strokeWidth="2" d="M0 6h18" /><path strokeWidth="3" d="M0 11h18" /><path strokeWidth="3.500" d="M0 16h18" /></Ico>
          <Ico><path strokeWidth="2" d="M0 3h18" /><path strokeWidth="2" strokeDasharray="5 1" d="M0 7h18" /><path strokeWidth="2" strokeDasharray="3 2" d="M0 11h18" /><path strokeWidth="2" strokeDasharray="1.500 2" d="M0 15h18" /></Ico>
          <Ico><path strokeWidth="1.500" d="M1 1v16M4 4h10M7 1.500 4.500 4 7 6.500M14 8H5M12 5.500 14.500 8 12 10.500" /><path fill="#eee" d="M7 13c3-4 7-4 10 0-3 4-7 4-10 0z" /><circle cx="12" cy="13" r="1.500" /></Ico>
          <Ico><path strokeWidth="1.500" d="M1 1v11h17M1 5h8v7" /><path strokeWidth="2.500" stroke="#ccc" d="M0 16h18" /></Ico>
        </div>
      </div>
      <p className="flex h-5 items-center border-t border-b-2 border-t-[#808080] border-b-[#333] pl-px">{status}</p>
    </footer>
  );
}

function CadWindow({ className, menuClass, title, titleIcon, pin, panel, wide, status, children }: {
  className: string;
  menuClass: string;
  title: string;
  titleIcon: ReactNode;
  pin?: boolean;
  panel: ReactNode;
  /** Room for the whole ribbon and the heads-up view tools. */
  wide?: boolean;
  status: string;
  children: ReactNode;
}) {
  return (
    <article className={clsx("flex min-w-0 flex-col overflow-hidden bg-[#f7f7f7]", className)}>
      <MenuBar className={menuClass} wide={wide} />
      <Ribbon wide={wide} />
      <CommandTabs wide={wide} />
      <div className="flex min-h-0 flex-1">
        <aside className="flex w-[234px] shrink-0 flex-col overflow-hidden border-r border-[#808080]">
          <div className="mr-[2px] h-5 border-t border-b border-t-[#7fa3ad] border-b-[#b0b0b0] pt-[3px]">
            <div className="grid h-full place-items-center border-t border-[#b0b0b0]">
              <Dot />
            </div>
          </div>
          <div className="mt-1 mr-[2px] flex h-[26px]">
            <span className="w-[2px] border-b border-[#a6a6a6]" />
            {PM_TABS.map((t, i) => (
              <button
                key={t.label}
                type="button"
                aria-label={t.label}
                className={clsx("grid w-10 place-items-center border-r border-[#808080]", i === 1 ? "" : "border-t border-b bg-[#d4d4d4]")}
              >
                {t.art}
              </button>
            ))}
            <span className="flex-1 border-b border-[#a6a6a6]" />
          </div>
          <div className="flex h-[34px] shrink-0 items-center justify-between pr-[14px] pl-[10px] font-bold text-[#222]">
            <span className="flex items-center gap-[6px]">
              {titleIcon}
              {title}
            </span>
            <HelpButton />
          </div>
          <OkCancel pin={pin} />
          <div className="mt-3 flex min-h-0 flex-1 overflow-visible">{panel}</div>
          <div className="mr-[2px] flex h-[5px] shrink-0 justify-center border-t border-[#b8b8b8]">
            <span className="h-[3px] w-full border-b border-[#b8b8b8]" />
          </div>
        </aside>
        <main className="relative min-w-0 flex-1 overflow-visible bg-[linear-gradient(175deg,#fff_0%,#fff_28%,#f3f4f7_40%,#e0e4ee_50%,#e2e5ef_55%,#ebecf1_60%,#fbfbfc_68%,#fff_74%,#fff_86%,#f7f8fb_100%)]">
          {children}
          <Handle className="top-[405px]" />
          <div className="flex items-center justify-between overflow-hidden pt-[7px] pr-[9px] pl-[6px]">
            <span className="flex items-center gap-[5px] whitespace-nowrap">
              <Ico className="mr-[8px] h-[7px] w-1" box="0 0 4 7">
                <path fill="#222" stroke="none" d="M0 0l4 3.500L0 7z" />
              </Ico>
              <PartIcon />
              Front base (Default) &lt;&lt;De...
            </span>
            {wide && (
              <span className="flex items-center gap-2">
                {HEADS_UP.map((h) => (
                  <button key={h.label} type="button" aria-label={h.label}>
                    <Ico>{h.art}</Ico>
                  </button>
                ))}
                <Down />
              </span>
            )}
          </div>
        </main>
      </div>
      <BottomBar status={status} />
    </article>
  );
}

const insertIcon = (
  <Ico>
    <path stroke="#444" fill="#fff" d="M1 17V9l2-2h4l2 2h3l-2 8z" />
    <path stroke="#444" d="M1 17l3-6h9l-3 6z" fill="#eee" />
    <path stroke="#2f9a1c" strokeWidth="1.800" d="M1 7 6 2M2 2h4v4" />
    <path stroke="#7a5200" fill="#f6c62b" strokeWidth=".8" d="M8 4l2-1V1l2.500-.8L15 1v3l2.500 1v4L15 11 8 7z" />
  </Ico>
);

const locateIcon = (
  <Ico className="h-[18px] w-[18px]" box="0 0 20 18">
    <path stroke="#333" fill="#fff" d="M1 4l3-2 3 1 3-2 3 2-4 4-3-1-3 2z" />
    <path stroke="#1d3f52" fill="#5fb0d2" d="M8 12l3-2 3 1 3-2 2 2-4 5-3-1-3 2z" />
    <path stroke="#222" strokeWidth="1.800" d="M12 1c3 0 4 1.500 4 5M13.500 4.500 16 7l2.500-2.500M3 10c0 3 1 4 4 5M2.500 16.500H7v-4" />
  </Ico>
);

/* ---------- right column ---------- */

const VIEW_BG = "relative min-w-0 flex-1 border-l border-[#808080]";

function CombinePanel() {
  return (
    <section className="flex min-h-0 flex-[482] bg-[#f7f7f7]">
      <aside className="w-[231px] shrink-0">
        <div className="flex h-[26px] items-center justify-between pr-[14px] pl-[7px] font-bold text-[#222]">
          <span className="flex items-center gap-[6px]">
            <CombineIcon />
            Combine1
          </span>
          <HelpButton />
        </div>
        <div className="mt-1 -ml-[3px]">
          <OkCancel />
        </div>
        <div className="mt-3 mr-2 ml-[2px]">
          <Section title="Operation Type" className="pb-[7px]">
            {["Add", "Subtract", "Common"].map((label, i) => (
              <label key={label} className="ml-[33px] flex h-5 items-center gap-[3px]">
                <input
                  type="radio"
                  name="operation"
                  defaultChecked={i === 0}
                  className="size-[13px] appearance-none rounded-full border border-[#333] bg-white checked:bg-[#333] checked:inset-ring-2 checked:inset-ring-white"
                />
                {label}
              </label>
            ))}
          </Section>
          <Section title="Bodies to Combine">
            <div className="mt-[2px] mr-2 flex pl-[7px]">
              <span className="w-[26px] pt-1">
                <CubeIcon />
              </span>
              <span className="mr-px w-[11px] border border-[#9fc3e6] bg-[#54a8ff]" />
              <ul className={clsx("h-[57px] flex-1 p-[2px] leading-4", HIGHLIGHT)}>
                <li className="pl-[2px]">&lt;Dog Head&gt;-&lt;Scale1&gt;</li>
                <li className="bg-[#0078d7] pl-[2px] text-white">Fillet4</li>
              </ul>
            </div>
            <div className="mt-[2px] ml-[126px]">
              <Dot />
            </div>
            <PushButton className="mt-[9px] ml-[63px] w-[90px]">Show Preview</PushButton>
          </Section>
        </div>
      </aside>
      <div className={clsx(VIEW_BG, "bg-[linear-gradient(176deg,#fff_0%,#fff_38%,#f3f4f8_58%,#e0e4ee_76%,#e2e5ef_85%,#eff0f4_100%)]")}>
        <CombinePreview />
        <Handle className="top-[351px]" />
      </div>
    </section>
  );
}

const TREE: { label: string; icon: ReactNode; arrow?: "right" | "down"; child?: boolean }[] = [
  { label: "History", arrow: "right", icon: <FolderIcon><circle cx="10.500" cy="11" r="4" stroke="#333" /><path stroke="#333" d="M10.500 8.500V11h2" /><path stroke="#1f7ba6" strokeWidth="1.600" d="M5 8v5h3M5 12c0-4 2-6 4-6" /></FolderIcon> },
  { label: "Sensors", icon: <FolderIcon><circle cx="9.500" cy="10.500" r="4.500" stroke="#333" fill="#fff" /><path stroke="#333" d="M9 12l3-4" /><path stroke="#e22400" strokeWidth="2.200" d="M13.500 11c-.4 1.600-1.500 2.600-3 3" /></FolderIcon> },
  { label: "Annotations", arrow: "right", icon: <FolderIcon><path stroke="#1f7ba6" strokeWidth="1.800" d="M5.500 15 9.500 6l4 9M7 12h5M4.500 15h2.500M12 15h2.500" /></FolderIcon> },
  { label: "Solid Bodies(1)", arrow: "down", icon: <FolderIcon><path stroke="#1d3f52" fill="#4f9dc0" d="M6 8l3-1.500L13 8v5l-3.500 2L6 13z" /><path stroke="#1d3f52" d="M6 8l3.500 1.300L13 8M9.500 9.300V15" /></FolderIcon> },
  { label: "Combine1", child: true, icon: <CubeIcon /> },
  { label: "Nylon 101", icon: <Ico><circle cx="2" cy="2.500" r="1.600" stroke="#555" fill="#fff" /><circle cx="2" cy="9" r="1.600" stroke="#1f7ba6" fill="#8ccbe6" /><circle cx="2" cy="15.500" r="1.600" stroke="#a87a00" fill="#f6c62b" /><path stroke="#222" strokeWidth="1.800" d="M6 2.500h11M6 9h11M6 15.500h3" /><circle cx="14" cy="15" r="2.200" stroke="#222" strokeWidth="2" /></Ico> },
  { label: "Front Plane", icon: <PlaneIcon /> },
  { label: "Top Plane", icon: <PlaneIcon /> },
  { label: "Right Plane", icon: <PlaneIcon /> },
  { label: "Origin", icon: <Ico><path stroke="#222" strokeWidth="1.800" d="M3.500 2v13.500H16M1.500 4 3.500 1l2 3M14 13.500l3 2-3 2" /></Ico> },
  { label: "Plane2", icon: <PlaneIcon /> },
  { label: "Plane1", icon: <PlaneIcon /> },
  { label: "Boss-Extrude1", arrow: "right", icon: <ExtrudeIcon /> },
  { label: "Boss-Extrude3", arrow: "right", icon: <ExtrudeIcon /> },
  { label: "Boss-Extrude2", arrow: "right", icon: <ExtrudeIcon /> },
  { label: "Fillet2", icon: <FilletIcon /> },
  { label: "Fillet4", icon: <FilletIcon /> },
  { label: "Dog Head -> (Default)", arrow: "right", icon: <PartIcon /> },
  { label: "Combine1", icon: <CombineIcon /> },
];

function TreePanel() {
  return (
    <section className="ml-[7px] flex min-h-0 flex-[452] bg-[#f7f7f7]">
      <aside className="w-[231px] shrink-0 border-t border-[#c0c0c0] pt-px pr-[3px]">
        <div className="flex h-[22px] items-center gap-[5px] overflow-hidden border-y border-[#3a8fc8] bg-[#a6c8e4] pl-[2px] whitespace-nowrap">
          <PartIcon />
          Front base (Default) &lt;&lt;Default&gt;_Display State
        </div>
        <ul className="border-b-[3px] border-[#3a8fc8] pt-px text-[12px]">
          {TREE.map((n, i) => (
            <li key={i} className={clsx("flex h-[22px] items-center gap-[5px]", n.child ? "pl-[47px]" : "pl-6")}>
              {n.arrow && (
                <Ico className="mr-[5px] -ml-[18px] size-2" box="0 0 8 8">
                  <path fill="#555" stroke="none" d={n.arrow === "right" ? "M2 0l4 4-4 4z" : "M0 2h8L4 6z"} />
                </Ico>
              )}
              {n.icon}
              {n.label}
            </li>
          ))}
        </ul>
      </aside>
      <div className={clsx(VIEW_BG, "bg-[linear-gradient(176deg,#fff_0%,#fff_32%,#f3f4f8_56%,#e0e4ee_74%,#e2e5ef_84%,#eeeff3_98%)]")}>
        <CombineResult />
        <Handle className="top-[331px]" />
      </div>
    </section>
  );
}

export default function App() {
  return (
    <div className={clsx("flex h-screen min-h-[1080px] overflow-hidden bg-white text-[11px] leading-4 text-black", FONT)}>
      <CadWindow className="mr-[22px] mb-[2px] flex-[902]" menuClass="h-[34px]" title="Insert Part" titleIcon={insertIcon} pin wide panel={<InsertPartPanel />} status="SOLIDWORKS Premium 2022 SP0.0">
        <BaseModel className="top-[219px] left-[236px] h-[280px] w-[397px]" />
      </CadWindow>
      <CadWindow className="mr-7 mb-[3px] flex-[484] shadow-[-4px_0_0_#f0f0f0]" menuClass="h-[33px]" title="Locate Part" titleIcon={locateIcon} panel={<TranslatePanel />} status="Selecting items inside the specified area.">
        <BaseModel className="top-[46px] left-[14px] h-[79px] w-[112px]" />
        <SmallDog id="dogA" />
      </CadWindow>
      <CadWindow className="mr-5 mb-px flex-[500] border-t border-[#c0c0c0]" menuClass="h-[34px]" title="Locate Part" titleIcon={locateIcon} panel={<MatePanel />} status="Selecting items inside the specified area.">
        <BaseModel className="top-[46px] left-[14px] h-[79px] w-[112px]" />
        <SmallDog id="dogB" />
      </CadWindow>
      <div className="flex min-w-0 flex-[716] flex-col gap-[62px] pt-[42px] pb-[42px]">
        <CombinePanel />
        <TreePanel />
      </div>
    </div>
  );
}
